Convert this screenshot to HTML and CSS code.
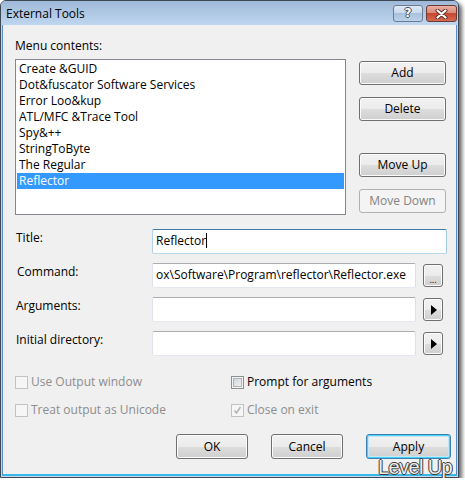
FILE: index.html
```html
<!DOCTYPE html>
<html>
<head>
<meta charset="utf-8">
<link rel="stylesheet" href="styles.css">
</head>
<body>
<div class="window">
  <div class="titlebar">
    <span class="title">External Tools</span>
    <div class="caps">
      <span class="cap help">?</span>
      <span class="cap close">
        <svg width="13" height="10" viewBox="0 0 13 10">
          <path d="M2.5 1.5 L10.5 8.5 M10.5 1.5 L2.5 8.5" stroke="#5a2a22" stroke-width="4" stroke-linecap="round"/>
          <path d="M2.5 1.5 L10.5 8.5 M10.5 1.5 L2.5 8.5" stroke="#ffffff" stroke-width="2.2" stroke-linecap="round"/>
        </svg>
      </span>
    </div>
  </div>
  <div class="client">
    <div class="lbl-top">Menu contents:</div>
    <div class="top">
      <ul class="listbox">
        <li>Create &amp;GUID</li>
        <li>Dot&amp;fuscator Software Services</li>
        <li>Error Loo&amp;kup</li>
        <li>ATL/MFC &amp;Trace Tool</li>
        <li>Spy&amp;++</li>
        <li>StringToByte</li>
        <li>The Regular</li>
        <li class="sel">Reflector</li>
      </ul>
      <div class="side">
        <div class="btn side-btn">Add</div>
        <div class="btn side-btn">Delete</div>
        <div class="btn side-btn gap-big">Move Up</div>
        <div class="btn side-btn dis">Move Down</div>
      </div>
    </div>
    <div class="form">
      <div class="row">
        <div class="lbl">Title:</div>
        <div class="edit wide focus">Reflector<span class="caret"></span></div>
      </div>
      <div class="row">
        <div class="lbl lbl-c">Command:</div>
        <div class="edit norm">ox\Software\Program\reflector\Reflector.exe</div>
        <div class="btn mini"><span class="dots">...</span></div>
      </div>
      <div class="row">
        <div class="lbl lbl-a">Arguments:</div>
        <div class="edit norm"></div>
        <div class="btn mini"><span class="tri"></span></div>
      </div>
      <div class="row">
        <div class="lbl lbl-a">Initial directory:</div>
        <div class="edit norm"></div>
        <div class="btn mini"><span class="tri"></span></div>
      </div>
    </div>
    <div class="checks">
      <div class="chk"><span class="box"></span>Use Output window</div>
      <div class="chk on"><span class="box"></span>Prompt for arguments</div>
      <div class="chk"><span class="box"></span>Treat output as Unicode</div>
      <div class="chk"><span class="box">
        <svg width="11" height="11" viewBox="0 0 11 11"><path d="M2.5 5.5 L4.5 8 L8.5 2" fill="none" stroke="#b4b4b4" stroke-width="1.6"/></svg>
      </span>Close on exit</div>
    </div>
    <div class="actions">
      <div class="btn act">OK</div>
      <div class="btn act">Cancel</div>
      <div class="btn act apply">Apply</div>
    </div>
  </div>
  <div class="watermark">Level Up</div>
</div>
</body>
</html>
```

FILE: styles.css
```css
body {
  margin: 0;
  background: #ffffff;
  font-family: "Open Sans", "Noto Sans", sans-serif;
  font-size: 12px;
  color: #000;
}

.window {
  position: relative;
  width: 459px;
  height: 478px;
  box-sizing: border-box;
  border: 1px solid #3e4754;
  border-radius: 6px 6px 0 0;
  background: #c4d8ee;
  box-shadow: 3px 3px 4px rgba(0, 0, 0, 0.6);
  display: flex;
  flex-direction: column;
}

.titlebar {
  height: 24px;
  flex: none;
  display: flex;
  align-items: flex-start;
  padding: 0 1px 0 5px;
  background: linear-gradient(#9fb9d8, #bfd6ef);
  border-radius: 5px 5px 0 0;
}

.title {
  margin-top: 5px;
  line-height: 16px;
  color: #000;
}

.caps {
  margin-left: auto;
  margin-top: 4px;
  display: flex;
  gap: 3px;
}

.cap {
  height: 17px;
  box-sizing: border-box;
  border: 1px solid #6c7d93;
  border-radius: 3px;
  display: flex;
  align-items: center;
  justify-content: center;
}

.help {
  width: 30px;
  background: linear-gradient(#dfe9f5 0%, #c9d9ec 45%, #aac1dc 50%, #bcd2ea 100%);
  color: #fff;
  font-family: "DejaVu Sans", sans-serif;
  font-weight: bold;
  font-size: 12px;
  line-height: 15px;
  text-shadow: 1px 0 0 #3d4c60, -1px 0 0 #3d4c60, 0 1px 0 #3d4c60, 0 -1px 0 #3d4c60;
}

.close {
  width: 31px;
  border-color: #6e3b33;
  background: linear-gradient(#eab0a3 0%, #db8a78 45%, #c7472f 50%, #d46a52 100%);
}

.client {
  flex: 1;
  margin: 0 1px 1px;
  border: 1px solid #5d8bc1;
  border-top: 0;
  border-bottom: 2px solid #38b8e6;
  background: #f0f0f0;
  padding: 13px 0 0 12px;
}

.lbl-top {
  line-height: 16px;
}

.top {
  display: flex;
  margin-top: 5px;
}

.listbox {
  width: 331px;
  height: 156px;
  box-sizing: border-box;
  border: 1px solid #828790;
  background: #fff;
  padding: 1px;
  margin: 0;
  list-style: none;
}

.listbox li {
  height: 16px;
  line-height: 16px;
  padding-left: 2px;
  white-space: nowrap;
}

.listbox li.sel {
  background: #3399ff;
  color: #fff;
}

.side {
  margin-left: 13px;
  padding-top: 2px;
  display: flex;
  flex-direction: column;
  gap: 12px;
}

.btn {
  box-sizing: border-box;
  border: 1px solid #707070;
  border-radius: 3px;
  background: linear-gradient(#f2f2f2 0%, #ebebeb 50%, #dddddd 51%, #cfcfcf 100%);
  box-shadow: inset 0 0 0 1px #fbfbfb;
  display: flex;
  align-items: center;
  justify-content: center;
  line-height: 16px;
}

.side-btn {
  width: 87px;
  height: 24px;
}

.gap-big {
  margin-top: 20px;
}

.btn.dis {
  border-color: #adb2b5;
  background: #f4f4f4;
  box-shadow: none;
  color: #838383;
}

.form {
  margin-top: 14px;
  display: flex;
  flex-direction: column;
  gap: 9px;
}

.row {
  display: flex;
  align-items: flex-start;
  height: 25px;
}

.lbl {
  width: 137px;
  box-sizing: border-box;
  padding-left: 1px;
  line-height: 16px;
  padding-top: 1px;
}

.lbl-c {
  padding-left: 2px;
}

.lbl-a {
  padding-left: 1px;
}

.edit {
  box-sizing: border-box;
  height: 25px;
  border: 1px solid;
  border-color: #abadb3 #dbdfe6 #e3e9ef #e2e3ea;
  border-radius: 2px;
  background: #fff;
  padding: 0 3px;
  line-height: 22px;
  white-space: nowrap;
  overflow: hidden;
}

.edit.wide {
  width: 295px;
}

.edit.norm {
  width: 264px;
}

.edit.focus {
  border-color: #3d7bad #a4c9e3 #b7d9ed #b5cfe7;
}

.caret {
  display: inline-block;
  width: 1px;
  height: 15px;
  background: #000;
  vertical-align: -3px;
}

.mini {
  margin-left: 7px;
  margin-top: 1px;
  width: 20px;
  height: 23px;
}

.dots {
  font-size: 9px;
  line-height: 9px;
  margin-top: 7px;
  letter-spacing: 0;
}

.tri {
  width: 0;
  height: 0;
  border-top: 5px solid transparent;
  border-bottom: 5px solid transparent;
  border-left: 6px solid #000;
  margin-left: 2px;
}

.checks {
  margin-top: 18px;
  display: grid;
  grid-template-columns: 216px auto;
  row-gap: 12px;
}

.chk {
  display: flex;
  align-items: center;
  gap: 3px;
  height: 16px;
  line-height: 16px;
  color: #8d8d8d;
}

.box {
  width: 13px;
  height: 13px;
  flex: none;
  box-sizing: border-box;
  border: 1px solid #c2c2c2;
  background: #f6f6f6;
  display: flex;
  align-items: center;
  justify-content: center;
}

.chk.on {
  color: #000;
}

.chk.on .box {
  border-color: #8e8f8f;
  background: linear-gradient(135deg, #cbcfd5, #f6f6f6);
  box-shadow: inset 0 0 0 1px #f4f4f4, inset 0 0 0 2px #b0b3b8;
}

.actions {
  margin-top: 16px;
  display: flex;
  justify-content: flex-end;
  gap: 23px;
  padding-right: 5px;
}

.act {
  width: 72px;
  height: 25px;
}

.act.apply {
  width: 85px;
  border-color: #3c7fb1;
  box-shadow: inset 0 0 0 1px #48d0f8, inset 0 0 0 2px #c4e8f8;
}

.watermark {
  position: absolute;
  left: 377px;
  top: 455px;
  white-space: nowrap;
  font-family: "Liberation Sans", sans-serif;
  font-size: 20px;
  line-height: 22px;
  letter-spacing: -0.6px;
  color: #ececec;
  text-shadow: 1px 0 0 #3a3a3a, -1px 0 0 #3a3a3a, 0 1px 0 #3a3a3a, 0 -1px 0 #3a3a3a;
}
```
